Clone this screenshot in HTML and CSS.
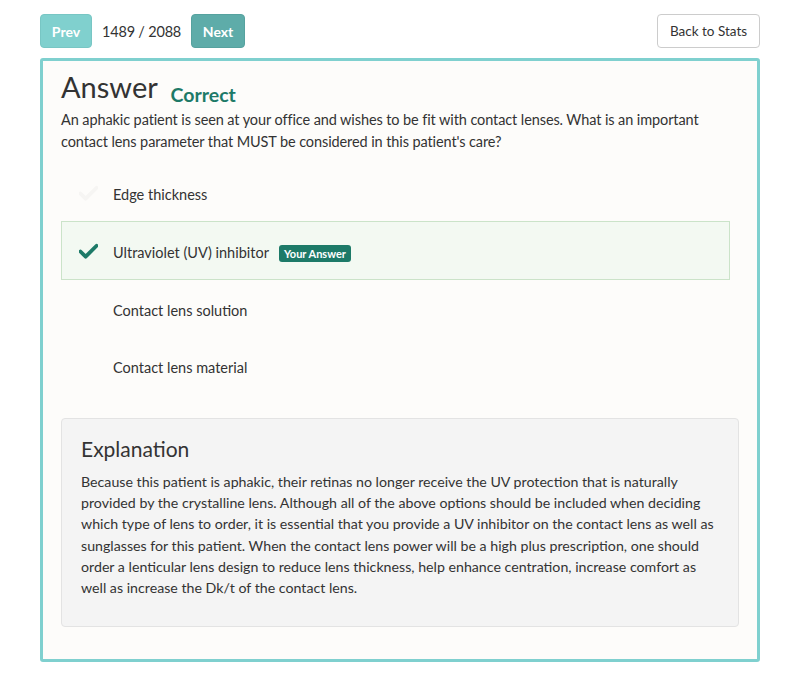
FILE: index.html
```html
<!DOCTYPE html>
<html>
<head>
<meta charset="utf-8">
<link rel="stylesheet" href="styles.css">
</head>
<body>
<div class="wrap">
  <div class="toolbar">
    <div class="nav">
      <button class="btn btn-prev">Prev</button>
      <span class="count">1489 / 2088</span>
      <button class="btn btn-next">Next</button>
    </div>
    <button class="btn-back">Back to Stats</button>
  </div>
  <div class="card">
    <div class="title-row">
      <h1 class="title">Answer</h1>
      <span class="status">Correct</span>
    </div>
    <p class="question">An aphakic patient is seen at your office and wishes to be fit with contact lenses. What is an important contact lens parameter that MUST be considered in this patient's care?</p>
    <ul class="options">
      <li class="option">
        <svg class="check faint" viewBox="0 0 20 16"><path d="M1.5 8.5 L7 14 L18.5 2.5" fill="none" stroke-width="4" stroke-linecap="round" stroke-linejoin="round"/></svg>
        <span>Edge thickness</span>
      </li>
      <li class="option selected">
        <svg class="check" viewBox="0 0 20 16"><path d="M1.5 8.5 L7 14 L18.5 2.5" fill="none" stroke-width="4" stroke-linecap="round" stroke-linejoin="round"/></svg>
        <span>Ultraviolet (UV) inhibitor</span>
        <span class="badge">Your Answer</span>
      </li>
      <li class="option"><span class="spacer"></span><span>Contact lens solution</span></li>
      <li class="option"><span class="spacer"></span><span>Contact lens material</span></li>
    </ul>
    <div class="explain">
      <h2 class="explain-title">Explanation</h2>
      <p class="explain-text">Because this patient is aphakic, their retinas no longer receive the UV protection that is naturally provided by the crystalline lens. Although all of the above options should be included when deciding which type of lens to order, it is essential that you provide a UV inhibitor on the contact lens as well as sunglasses for this patient. When the contact lens power will be a high plus prescription, one should order a lenticular lens design to reduce lens thickness, help enhance centration, increase comfort as well as increase the Dk/t of the contact lens.</p>
    </div>
  </div>
</div>
</body>
</html>
```

FILE: styles.css
```css
* { box-sizing: border-box; }
html, body { margin: 0; padding: 0; background: #ffffff; }
body {
  font-family: Lato, "Open Sans", sans-serif;
  color: #333333;
  font-size: 15px;
}
.wrap {
  width: 720px;
  margin: 0 auto;
  padding-top: 14px;
}
.toolbar {
  display: flex;
  justify-content: space-between;
  align-items: center;
  height: 34px;
}
.nav {
  display: flex;
  align-items: center;
  gap: 10px;
}
.btn {
  height: 34px;
  border: 1px solid transparent;
  border-radius: 4px;
  color: #ffffff;
  font-family: Lato, sans-serif;
  font-weight: 700;
  font-size: 14px;
  padding: 0 10px;
}
.btn-prev { background: #80d0ce; border-color: #78c6c4; width: 52px; }
.btn-next { background: #5eaca9; border-color: #56a29f; width: 54px; }
.count { font-size: 14.5px; letter-spacing: -0.2px; color: #333; }
.btn-back {
  height: 34px;
  width: 103px;
  padding: 0;
  background: #ffffff;
  border: 1px solid #cccccc;
  border-radius: 4px;
  font-family: Lato, sans-serif;
  font-size: 13.5px;
  color: #333;
}
.card {
  margin-top: 10px;
  border: 3px solid #7fd0cf;
  border-radius: 3px;
  background: #fdfcfa;
  padding: 8px 18px 32px 18px;
}
.title-row {
  line-height: 36px;
  height: 36px;
}
.title {
  display: inline;
  margin: 0;
  font-size: 29px;
  font-weight: 400;
  color: #333;
}
.status {
  margin-left: 9px;
  font-size: 19.5px;
  font-weight: 700;
  color: #1d7a68;
  vertical-align: -4px;
}
.question {
  margin: 4px 0 0 0;
  line-height: 22px;
  font-size: 14.5px;
  letter-spacing: -0.1px;
  padding-right: 20px;
}
.options {
  list-style: none;
  margin: 11px 0 0 0;
  padding: 0;
  width: 669px;
  font-size: 14.5px;
}
.option {
  display: flex;
  align-items: center;
  height: 57px;
  padding-left: 17px;
  padding-top: 3px;
  border: 1px solid transparent;
}
.option.selected {
  background: #f3f9f2;
  border-color: #cbe3c9;
  height: 59px;
}
.check {
  width: 19px;
  height: 16px;
  margin-right: 15px;
  margin-top: -2px;
  stroke: #1d7a68;
}
.check.faint { stroke: #f6f5f3; }
.spacer { width: 34px; flex: none; }
.badge {
  margin-left: 10px;
  background: #1d7a68;
  color: #fff;
  font-size: 11px;
  font-weight: 700;
  padding: 3px 5px 2px;
  border-radius: 3px;
  line-height: 12px;
  margin-top: 2px;
}
.explain {
  margin-top: 24px;
  background: #f4f4f4;
  border: 1px solid #e3e3e3;
  border-radius: 4px;
  padding: 16px 20px 28px 19px;
}
.explain-title {
  margin: 0;
  font-size: 21px;
  font-weight: 400;
  line-height: 28px;
  color: #333;
}
.explain-text {
  margin: 8px 0 0 0;
  font-size: 14.2px;
  line-height: 21.2px;
}
```
